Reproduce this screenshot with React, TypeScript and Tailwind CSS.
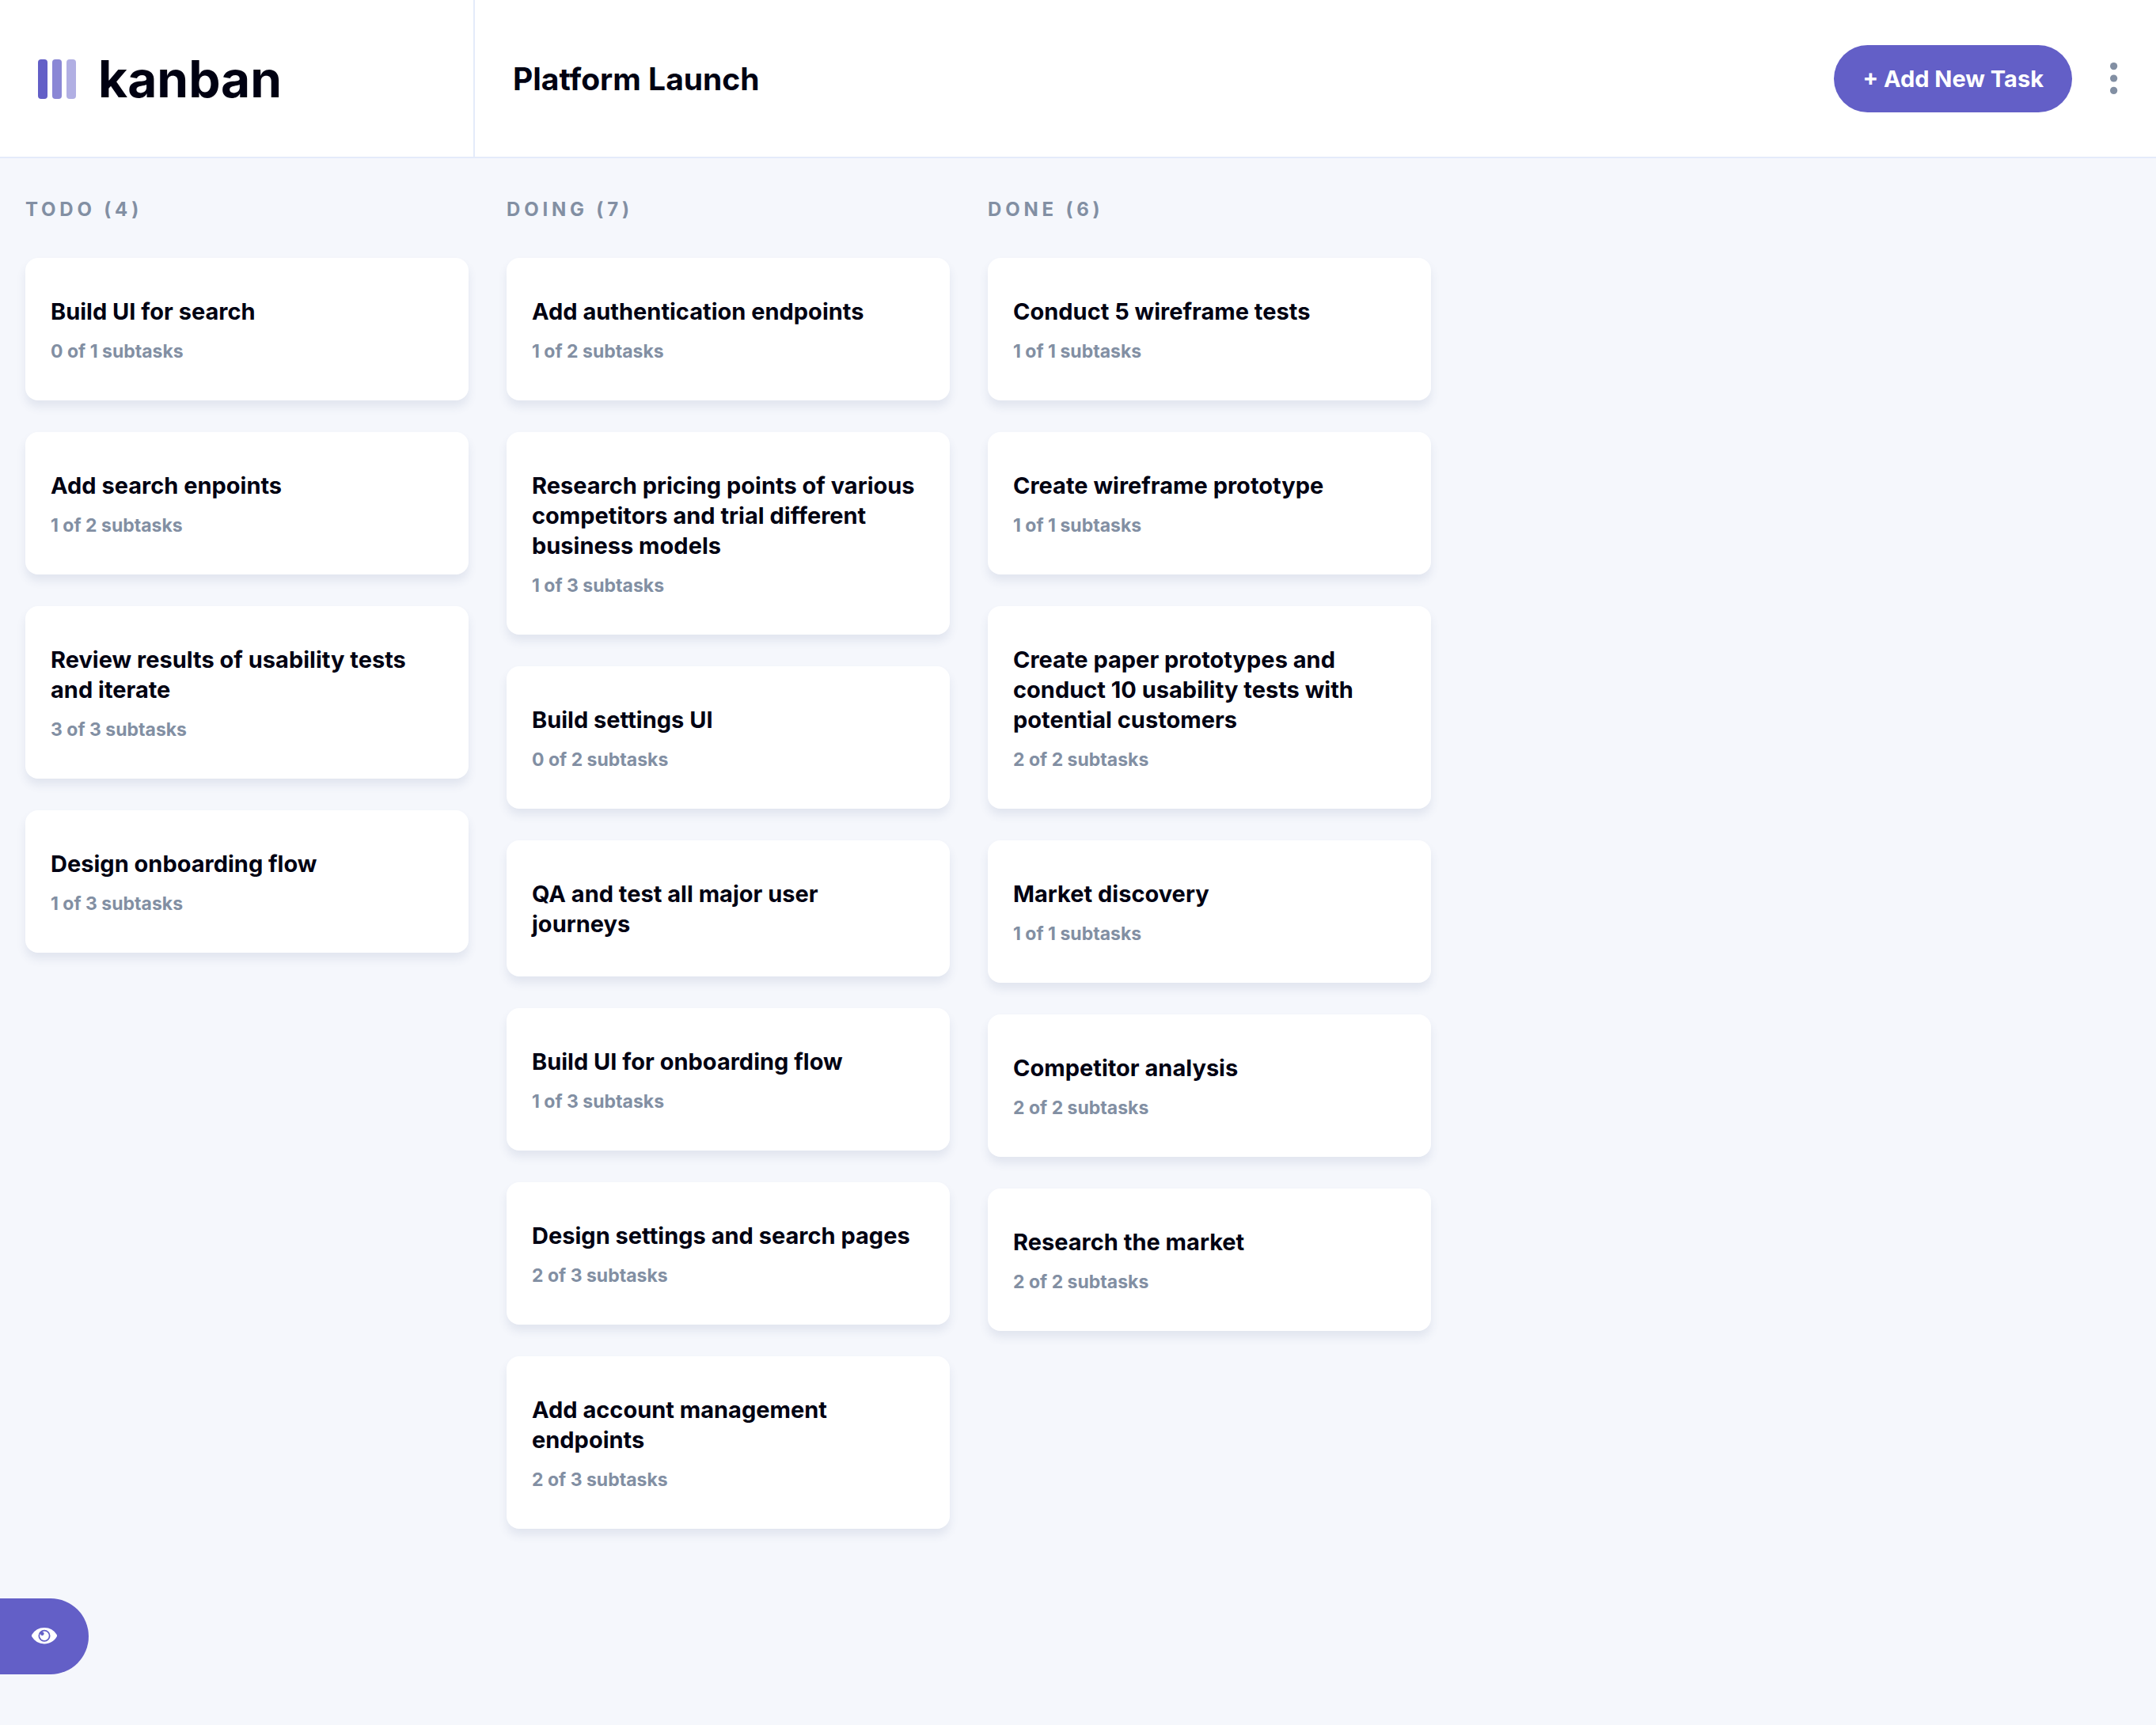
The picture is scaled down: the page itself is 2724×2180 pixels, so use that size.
type Task = { title: string; done?: number; total?: number };
type Column = { name: string; tasks: Task[] };

const columns: Column[] = [
  {
    name: "TODO",
    tasks: [
      { title: "Build UI for search", done: 0, total: 1 },
      { title: "Add search enpoints", done: 1, total: 2 },
      { title: "Review results of usability tests and iterate", done: 3, total: 3 },
      { title: "Design onboarding flow", done: 1, total: 3 },
    ],
  },
  {
    name: "DOING",
    tasks: [
      { title: "Add authentication endpoints", done: 1, total: 2 },
      {
        title: "Research pricing points of various competitors and trial different business models",
        done: 1,
        total: 3,
      },
      { title: "Build settings UI", done: 0, total: 2 },
      { title: "QA and test all major user journeys" },
      { title: "Build UI for onboarding flow", done: 1, total: 3 },
      { title: "Design settings and search pages", done: 2, total: 3 },
      { title: "Add account management endpoints", done: 2, total: 3 },
    ],
  },
  {
    name: "DONE",
    tasks: [
      { title: "Conduct 5 wireframe tests", done: 1, total: 1 },
      { title: "Create wireframe prototype", done: 1, total: 1 },
      {
        title: "Create paper prototypes and conduct 10 usability tests with potential customers",
        done: 2,
        total: 2,
      },
      { title: "Market discovery", done: 1, total: 1 },
      { title: "Competitor analysis", done: 2, total: 2 },
      { title: "Research the market", done: 2, total: 2 },
    ],
  },
];

function Logo() {
  return (
    <div className="flex w-[600px] shrink-0 items-center gap-7 border-r-2 border-[#e4ebfa] pt-0.5 pl-12">
      <svg width="48" height="50" viewBox="0 0 48 50" fill="#635fc7" aria-hidden="true">
        <rect width="12" height="50" rx="4" />
        <rect x="18" width="12" height="50" rx="4" opacity="0.75" />
        <rect x="36" width="12" height="50" rx="4" opacity="0.5" />
      </svg>
      <span className="text-[64px] leading-none">kanban</span>
    </div>
  );
}

function Header() {
  return (
    <header className="flex h-[200px] items-stretch border-b-2 border-[#e4ebfa] bg-white">
      <Logo />
      <div className="flex grow items-center justify-between px-12">
        <h1 className="pt-0.5 text-[39px] leading-[50px]">Platform Launch</h1>
        <div className="flex items-center gap-12">
          <button
            type="button"
            className="h-[85px] cursor-pointer rounded-full bg-[#635fc7] px-9 pt-0.5 text-[29px] text-white"
          >
            + Add New Task
          </button>
          <button type="button" aria-label="Board options" className="cursor-pointer">
            <svg width="10" height="40" viewBox="0 0 5 20" fill="#828fa3" className="block">
              <circle cx="2.308" cy="2.308" r="2.308" />
              <circle cx="2.308" cy="10" r="2.308" />
              <circle cx="2.308" cy="17.692" r="2.308" />
            </svg>
          </button>
        </div>
      </div>
    </header>
  );
}

function TaskCard({ task }: { task: Task }) {
  return (
    <article className="rounded-2xl bg-white pt-[49px] pr-10 pb-[47px] pl-8 shadow-[0_8px_12px_rgba(54,78,126,0.1)]">
      <h3 className="text-[29px] leading-[38px]">{task.title}</h3>
      {task.total !== undefined && (
        <p className="mt-4 text-[23px] leading-[30px] text-[#828fa3]">
          {`${task.done} of ${task.total} subtasks`}
        </p>
      )}
    </article>
  );
}

function BoardColumn({ column }: { column: Column }) {
  return (
    <section className="w-[560px] shrink-0">
      <h2 className="mb-[46px] text-2xl leading-[30px] tracking-[0.2em] text-[#828fa3]">
        {`${column.name} (${column.tasks.length})`}
      </h2>
      <div className="flex flex-col gap-10">
        {column.tasks.map((task) => (
          <TaskCard key={task.title} task={task} />
        ))}
      </div>
    </section>
  );
}

export default function App() {
  return (
    <div className="min-h-screen bg-[#f5f7fc] font-['Inter',sans-serif] font-bold text-[#000112]">
      <Header />
      <main className="flex items-start gap-12 px-8 pt-[50px] pb-16">
        {columns.map((column) => (
          <BoardColumn key={column.name} column={column} />
        ))}
      </main>
      <button
        type="button"
        aria-label="Show sidebar"
        className="fixed bottom-16 left-0 flex h-24 w-28 cursor-pointer items-center rounded-r-full bg-[#635fc7] pl-10"
      >
        <svg width="32" height="22" viewBox="0 0 16 11" fill="#fff" aria-hidden="true">
          <path d="M15.815 4.434A9.055 9.055 0 0 0 8 0 9.055 9.055 0 0 0 .185 4.434a1.333 1.333 0 0 0 0 1.354A9.055 9.055 0 0 0 8 10.222c3.33 0 6.25-1.777 7.815-4.434a1.333 1.333 0 0 0 0-1.354ZM8 8.89A3.776 3.776 0 0 1 4.222 5.11 3.776 3.776 0 0 1 8 1.333a3.776 3.776 0 0 1 3.778 3.778A3.776 3.776 0 0 1 8 8.89Zm2.889-3.778a2.889 2.889 0 1 1-5.438-1.36 1.19 1.19 0 1 0 1.19-1.189H6.64a2.889 2.889 0 0 1 4.25 2.549Z" />
        </svg>
      </button>
    </div>
  );
}
